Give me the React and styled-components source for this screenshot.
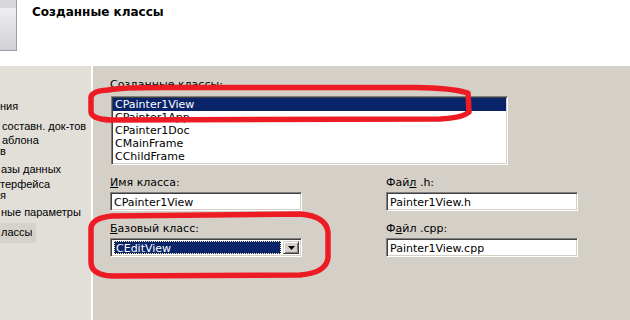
import React from "react";
import styled, { createGlobalStyle } from "styled-components";

const Global = createGlobalStyle`
  html, body { margin: 0; padding: 0; background: #fff; }
  body {
    width: 630px;
    height: 320px;
    overflow: hidden;
    font-family: "DejaVu Sans", sans-serif;
  }
`;

const Page = styled.div`
  position: relative;
  width: 630px;
  height: 320px;
  display: flex;
  flex-direction: column;
`;

const Header = styled.header`
  height: 66px;
  flex: none;
  display: flex;
  align-items: flex-start;
  background: #fff;
`;

const HeaderIcon = styled.div`
  width: 16px;
  height: 50px;
  border-right: 1px solid #9c9ca4;
  border-bottom: 1px solid #9c9ca4;
  background: linear-gradient(#d7d7db 0, #d7d7db 8px, #efeff1 8px, #d0d0d5 100%);
`;

const Title = styled.h1`
  margin: 5px 0 0 15px;
  font: bold 12px/14px "DejaVu Sans", sans-serif;
  color: #000;
`;

const Body = styled.div`
  flex: 1;
  display: flex;
  min-height: 0;
`;

const Nav = styled.nav`
  width: 91px;
  flex: none;
  border-right: 2px solid #fff;
  background: #e1dfd8;
  padding-top: 35px;
  overflow: hidden;
  font: 11px/11px "Liberation Sans", Arial, sans-serif;
  color: #000;
`;

const NavItem = styled.div`
  margin-top: ${(p) => p.$gap || 0}px;
  ${(p) =>
    p.$active &&
    `
    display: inline-block;
    background: #d5d2cb;
    padding: 4px 4px 5px 0;
  `}
`;

const NavLine = styled.span`
  display: block;
  white-space: nowrap;
  margin-left: ${(p) => p.$shift || 0}px;
`;

const Content = styled.main`
  flex: 1;
  background: #d4d0c8;
  padding: 12px 0 0 17px;
  font: 11px "DejaVu Sans", sans-serif;
  color: #000;
`;

const Label = styled.div`
  line-height: 13px;
  height: 13px;
  white-space: nowrap;
`;

const sunken = `
  box-sizing: border-box;
  border: 1px solid;
  border-color: #808080 #ffffff #ffffff #808080;
  box-shadow: inset 1px 1px 0 #404040, inset -1px -1px 0 #d4d0c8;
`;

const ListBox = styled.div`
  ${sunken}
  margin: 5px 0 0 1px;
  width: 397px;
  height: 69px;
  padding: 1px;
  background: #fff;
  overflow: hidden;
`;

const ListRow = styled.div`
  height: 13px;
  line-height: 13px;
  padding-left: 2px;
  white-space: nowrap;
  background: ${(p) => (p.$selected ? "#0a246a" : "transparent")};
  color: ${(p) => (p.$selected ? "#fff" : "#000")};
`;

const FieldGrid = styled.div`
  display: grid;
  grid-template-columns: 192px 192px;
  column-gap: 84px;
  row-gap: 11px;
  margin-top: 11px;
`;

const Field = styled.div`
  display: flex;
  flex-direction: column;
  gap: ${(p) => p.$gap}px;
`;

const TextBox = styled.div`
  ${sunken}
  height: 19px;
  padding: 2px 3px;
  background: #fff;
  line-height: 15px;
  white-space: nowrap;
`;

const Combo = styled.div`
  ${sunken}
  height: 19px;
  padding: 2px;
  background: #fff;
  display: flex;
  gap: 1px;
`;

const ComboValue = styled.div`
  flex: 1;
  background: #0a246a;
  color: #fff;
  margin: 0 1px 0 1px;
  border: 1px dotted #fff4b8;
  box-sizing: border-box;
  padding-left: 1px;
  line-height: 13px;
  white-space: nowrap;
`;

const ComboButton = styled.div`
  width: 16px;
  flex: none;
  box-sizing: border-box;
  background: #d4d0c8;
  border: 1px solid;
  border-color: #d4d0c8 #404040 #404040 #d4d0c8;
  box-shadow: inset 1px 1px 0 #fff, inset -1px -1px 0 #808080;
  display: flex;
  align-items: center;
  justify-content: center;
`;

const Overlay = styled.svg`
  position: absolute;
  left: 0;
  top: 0;
  width: 630px;
  height: 320px;
  pointer-events: none;
`;

export default function App() {
  return (
    <Page>
      <Global />
      <Header>
        <HeaderIcon />
        <Title>Созданные классы</Title>
      </Header>
      <Body>
        <Nav>
          <NavItem>
            <NavLine>ния</NavLine>
          </NavItem>
          <NavItem $gap={9}>
            <NavLine $shift={2}> составн. док-тов</NavLine>
          </NavItem>
          <NavItem $gap={3}>
            <NavLine $shift={2}>аблона</NavLine>
            <NavLine>в</NavLine>
          </NavItem>
          <NavItem $gap={7}>
            <NavLine $shift={1}>азы данных</NavLine>
          </NavItem>
          <NavItem $gap={4}>
            <NavLine>терфейса</NavLine>
            <NavLine>я</NavLine>
          </NavItem>
          <NavItem $gap={6}>
            <NavLine $shift={1}>ные параметры</NavLine>
          </NavItem>
          <div style={{ marginTop: 5 }}>
            <NavItem $active>
              <NavLine $shift={1}>лассы</NavLine>
            </NavItem>
          </div>
        </Nav>
        <Content>
          <Label>
            <u>С</u>озданные классы:
          </Label>
          <ListBox>
            <ListRow $selected>CPainter1View</ListRow>
            <ListRow>CPainter1App</ListRow>
            <ListRow>CPainter1Doc</ListRow>
            <ListRow>CMainFrame</ListRow>
            <ListRow>CChildFrame</ListRow>
          </ListBox>
          <FieldGrid>
            <Field $gap={3}>
              <Label>
                <u>И</u>мя класса:
              </Label>
              <TextBox>CPainter1View</TextBox>
            </Field>
            <Field $gap={3}>
              <Label>
                Фай<u>л</u> .h:
              </Label>
              <TextBox>Painter1View.h</TextBox>
            </Field>
            <Field $gap={3}>
              <Label>
                <u>Б</u>азовый класс:
              </Label>
              <Combo>
                <ComboValue>CEditView</ComboValue>
                <ComboButton>
                  <svg width="7" height="4" viewBox="0 0 7 4">
                    <path d="M0 0h7L3.5 4z" fill="#000" />
                  </svg>
                </ComboButton>
              </Combo>
            </Field>
            <Field $gap={3}>
              <Label>
                Ф<u>а</u>йл .cpp:
              </Label>
              <TextBox>Painter1View.cpp</TextBox>
            </Field>
          </FieldGrid>
        </Content>
      </Body>
      <Overlay viewBox="0 0 630 320">
        <path
          d="M108 90 Q120 87 180 87.5 L415 87.5 Q452 88 468 93 L469 112 Q462 118 440 119 L110 120 Q92 119 91 112 L91 97 Q92 91 108 90 Z"
          fill="none"
          stroke="#ed1c24"
          strokeWidth="5.5"
          strokeLinejoin="round"
        />
        <path
          d="M112 216 L300 214 Q326 216 328 232 L328 258 Q326 273 300 275 L112 276 Q91 275 91 262 L91 228 Q92 218 112 216 Z"
          fill="none"
          stroke="#ed1c24"
          strokeWidth="5.5"
          strokeLinejoin="round"
        />
      </Overlay>
    </Page>
  );
}
